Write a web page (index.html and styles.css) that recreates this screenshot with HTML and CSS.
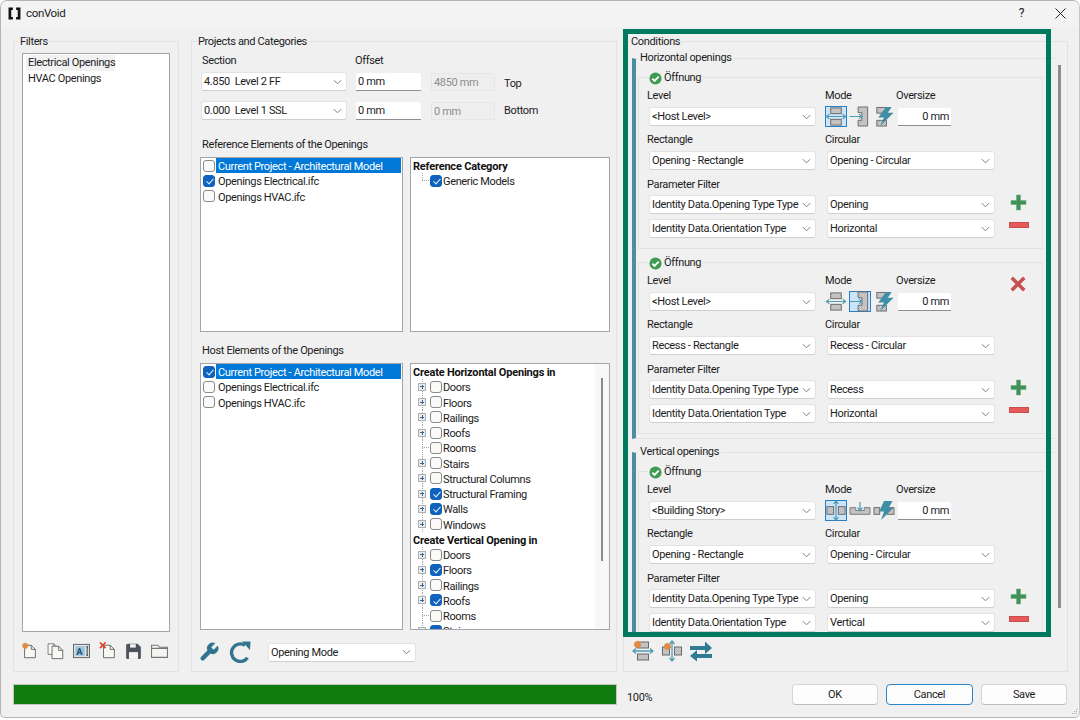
FILE: index.html
```html
<!DOCTYPE html>
<html lang="en">
<head>
<meta charset="utf-8">
<title>conVoid</title>
<link rel="stylesheet" href="styles.css">
</head>
<body>
<svg class="defs" aria-hidden="true">
  <defs>
    <pattern id="hatch" width="2.500" height="2.500" patternUnits="userSpaceOnUse">
      <rect width="2.500" height="2.500" fill="#d4d4d4"/>
      <path d="M0 2.500L2.500 0" stroke="#8a8a8a" stroke-width=".6"/>
    </pattern>
    <symbol id="chev" viewBox="0 0 10 6"><path d="M1 1l4 4 4-4" fill="none" stroke="#6f6f6f" stroke-width="1"/></symbol>
    <symbol id="ok" viewBox="0 0 14 14"><circle cx="7" cy="7" r="6.500" fill="#3f9a52"/><path d="M3.600 7.200l2.400 2.400 4.400-4.600" fill="none" stroke="#fff" stroke-width="2"/></symbol>
    <symbol id="plus" viewBox="0 0 17 17"><path d="M6.500 1h4v5.500H16v4h-5.500V16h-4v-5.500H1v-4h5.500z" fill="#3f9159" stroke="#6fae83" stroke-width=".6"/></symbol>
    <symbol id="minus" viewBox="0 0 20 6"><rect x=".5" y=".5" width="19" height="5" fill="#e8595a" stroke="#c45050"/></symbol>
    <symbol id="cross" viewBox="0 0 16 16"><path d="M3 .5l5 5 5-5L15.500 3l-5 5 5 5-2.500 2.500-5-5-5 5L.5 13l5-5-5-5z" fill="#c8504f"/></symbol>
    <symbol id="ht" viewBox="0 0 22 22">
      <rect x="5.500" y="2" width="11" height="6" fill="url(#hatch)" stroke="#6a6a6a"/>
      <rect x="5.500" y="14" width="11" height="6" fill="url(#hatch)" stroke="#6a6a6a"/>
      <path d="M1 11h20M4 8.500L1 11l3 2.500M18 8.500l3 2.500-3 2.500" fill="none" stroke="#4f9db3" stroke-width="1.300"/>
    </symbol>
    <symbol id="hr" viewBox="0 0 22 22">
      <path d="M9 1h10v20H9v-6h4V7H9z" fill="url(#hatch)" stroke="#6a6a6a"/>
      <path d="M0 11h13M10 8.500l3 2.500-3 2.500" fill="none" stroke="#4f9db3" stroke-width="1.300"/>
    </symbol>
    <symbol id="hl" viewBox="0 0 22 22">
      <rect x="3.500" y="1.500" width="10" height="6" fill="url(#hatch)" stroke="#6a6a6a"/>
      <rect x="3.500" y="15" width="10" height="6" fill="url(#hatch)" stroke="#6a6a6a"/>
      <path d="M13 1h6l-4 6h6L7 21l4-9H5z" fill="#3f8ea6"/>
    </symbol>
    <symbol id="vt" viewBox="0 0 22 22">
      <rect x="1.500" y="7" width="7" height="8" fill="url(#hatch)" stroke="#6a6a6a"/>
      <rect x="13.500" y="7" width="7" height="8" fill="url(#hatch)" stroke="#6a6a6a"/>
      <path d="M11 1v20M8.500 4L11 1l2.500 3M8.500 18l2.500 3 2.500-3" fill="none" stroke="#4f9db3" stroke-width="1.300"/>
    </symbol>
    <symbol id="vr" viewBox="0 0 22 22">
      <path d="M.5 8h6v3h9V8h6v7H.5z" fill="url(#hatch)" stroke="#7a7a7a"/>
      <path d="M11 2v9M8.500 8l2.500 3 2.500-3" fill="none" stroke="#4f9db3" stroke-width="1.300"/>
    </symbol>
    <symbol id="vl" viewBox="0 0 22 22">
      <rect x=".5" y="8" width="6" height="7" fill="url(#hatch)" stroke="#6a6a6a"/>
      <rect x="14.500" y="8" width="7" height="7" fill="url(#hatch)" stroke="#6a6a6a"/>
      <path d="M11 1h9l-4 7h5L8 21l3-9H6z" fill="#3f8ea6"/>
    </symbol>
    <symbol id="gear" viewBox="0 0 8 8"><circle cx="4" cy="4" r="2.700" fill="#e08a45" stroke="#e08a45" stroke-width="1.200" stroke-dasharray="1.500 .8"/></symbol>
    <symbol id="page" viewBox="0 0 16 18"><path d="M1.500 1.500h8l5 5v10h-13z" fill="#f9f9f4" stroke="#555"/><path d="M9.500 1.500v5h5" fill="none" stroke="#555"/></symbol>
  </defs>
</svg>

<div class="window">
  <header class="titlebar">
    <svg class="logo" viewBox="0 0 12 12" aria-hidden="true"><path d="M.5.500h4v2.200H3v6.600h1.500v2.200h-4zM11.500.500h-4v2.200H9v6.600H7.500v2.200h4z" fill="#111"/></svg>
    <span class="app-name">conVoid</span>
    <span class="help">?</span>
    <svg class="close" viewBox="0 0 11 11" aria-hidden="true"><path d="M.5.500l10 10M10.500.500l-10 10" stroke="#222" stroke-width="1"/></svg>
  </header>

  <main class="main">
    <section class="group filters">
      <div class="group-title">Filters</div>
      <div class="list filter-list">
        <div class="filter-item current">Electrical Openings</div>
        <div class="filter-item">HVAC Openings</div>
      </div>
      <div class="filter-tools">
        <span class="tool"><svg viewBox="0 0 17 19"><use href="#page" x="2" y="2" width="14" height="16"/><use href="#gear" x="0" y="0" width="8" height="8"/></svg></span>
        <span class="tool"><svg viewBox="0 0 18 19"><use href="#page" x="0" y="0" width="12" height="15"/><use href="#page" x="4" y="3" width="14" height="16"/></svg></span>
        <span class="tool"><svg viewBox="0 0 18 15"><rect x=".5" y=".5" width="17" height="14" fill="#dfe3e6" stroke="#5b6168"/><rect x="2.500" y="2.500" width="10" height="10" fill="#9cc3dc"/><text x="3.500" y="11.500" class="ai-text">A</text><path d="M15 3v9M14 3h2M14 12h2" stroke="#333" fill="none"/></svg></span>
        <span class="tool"><svg viewBox="0 0 17 19"><use href="#page" x="3" y="2" width="14" height="16"/><path d="M.5.500l6 6M6.500.500l-6 6" stroke="#d8432f" stroke-width="1.800"/></svg></span>
        <span class="tool"><svg viewBox="0 0 15 15"><path d="M1 2.500A1.500 1.500 0 0 1 2.500 1H11l3 3v9.500a1 1 0 0 1-1 1H2a1 1 0 0 1-1-1z" fill="#4d535b"/><rect x="4.500" y="1.500" width="5" height="3" fill="#f4f4f4"/><rect x="3.500" y="8.500" width="8" height="6" fill="#f4f4f4"/></svg></span>
        <span class="tool"><svg viewBox="0 0 16 14"><path d="M.5 1.500h6l1.500 2h7.500v9.500H.5z" fill="#f4f4f0" stroke="#777"/><path d="M.5 4.500h15" stroke="#777"/></svg></span>
      </div>
    </section>

    <section class="group projects">
      <div class="group-title">Projects and Categories</div>
      <div class="section-head">
        <span class="lbl lbl-section">Section</span>
        <span class="lbl">Offset</span>
      </div>
      <div class="level-row">
        <div class="combo level-combo"><span>4.850&nbsp; Level 2 FF</span><svg class="chev"><use href="#chev"/></svg></div>
        <div class="input offset">0 mm</div>
        <div class="input disabled">4850 mm</div>
        <span class="side-lbl side-top">Top</span>
      </div>
      <div class="level-row">
        <div class="combo level-combo"><span>0.000&nbsp; Level 1 SSL</span><svg class="chev"><use href="#chev"/></svg></div>
        <div class="input offset">0 mm</div>
        <div class="input disabled">0 mm</div>
        <span class="side-lbl">Bottom</span>
      </div>

      <div class="lbl list-head first-head">Reference Elements of the Openings</div>
      <div class="list-pair ref-pair">
        <div class="list model-list">
          <div class="check-row"><i class="cb"></i><span class="row-text selected">Current Project - Architectural Model</span></div>
          <div class="check-row"><i class="cb on"></i><span class="row-text">Openings Electrical.ifc</span></div>
          <div class="check-row"><i class="cb"></i><span class="row-text">Openings HVAC.ifc</span></div>
        </div>
        <div class="list tree-list">
          <div class="tree-head">Reference Category</div>
          <div class="tree-row last"><i class="leaf"></i><i class="cb on"></i><span>Generic Models</span></div>
        </div>
      </div>

      <div class="lbl list-head">Host Elements of the Openings</div>
      <div class="list-pair host-pair">
        <div class="list model-list">
          <div class="check-row"><i class="cb on"></i><span class="row-text selected">Current Project - Architectural Model</span></div>
          <div class="check-row"><i class="cb"></i><span class="row-text">Openings Electrical.ifc</span></div>
          <div class="check-row"><i class="cb"></i><span class="row-text">Openings HVAC.ifc</span></div>
        </div>
        <div class="list tree-list host-tree">
          <div class="tree-body">
            <div class="tree-head">Create Horizontal Openings in</div>
            <div class="tree-row"><i class="exp"></i><i class="cb"></i><span>Doors</span></div>
            <div class="tree-row"><i class="exp"></i><i class="cb"></i><span>Floors</span></div>
            <div class="tree-row"><i class="exp"></i><i class="cb"></i><span>Railings</span></div>
            <div class="tree-row"><i class="exp"></i><i class="cb"></i><span>Roofs</span></div>
            <div class="tree-row"><i class="leaf"></i><i class="cb"></i><span>Rooms</span></div>
            <div class="tree-row"><i class="exp"></i><i class="cb"></i><span>Stairs</span></div>
            <div class="tree-row"><i class="exp"></i><i class="cb"></i><span>Structural Columns</span></div>
            <div class="tree-row"><i class="exp"></i><i class="cb on"></i><span>Structural Framing</span></div>
            <div class="tree-row"><i class="exp"></i><i class="cb on"></i><span>Walls</span></div>
            <div class="tree-row"><i class="exp"></i><i class="cb"></i><span>Windows</span></div>
            <div class="tree-head">Create Vertical Opening in</div>
            <div class="tree-row"><i class="exp"></i><i class="cb"></i><span>Doors</span></div>
            <div class="tree-row"><i class="exp"></i><i class="cb on"></i><span>Floors</span></div>
            <div class="tree-row"><i class="exp"></i><i class="cb"></i><span>Railings</span></div>
            <div class="tree-row"><i class="exp"></i><i class="cb on"></i><span>Roofs</span></div>
            <div class="tree-row"><i class="leaf"></i><i class="cb"></i><span>Rooms</span></div>
            <div class="tree-row"><i class="exp"></i><i class="cb on"></i><span>Stairs</span></div>
          </div>
          <div class="tree-scroll"><div class="tree-thumb"></div></div>
        </div>
      </div>

      <div class="project-tools">
        <svg class="big-tool" viewBox="0 0 24 24" aria-hidden="true"><path d="M14.700 6.300a1 1 0 0 0 0 1.400l1.600 1.600a1 1 0 0 0 1.400 0l3.770-3.770a6 6 0 0 1-7.940 7.940l-6.910 6.910a2.120 2.120 0 0 1-3-3l6.910-6.910a6 6 0 0 1 7.940-7.940l-3.760 3.760z" fill="#2f7391" stroke="#2f7391" stroke-width=".7"/></svg>
        <svg class="big-tool" viewBox="0 0 22 22" aria-hidden="true"><path d="M18.500 16.800A8.800 8.800 0 1 1 16 4.200" fill="none" stroke="#33758f" stroke-width="3.400"/><path d="M13 .5h8.500L21 9z" fill="#33758f"/></svg>
        <div class="combo mode-combo"><span>Opening Mode</span><svg class="chev"><use href="#chev"/></svg></div>
      </div>
    </section>

    <section class="group conditions">
      <div class="group-title">Conditions</div>
      <div class="cond-body">
        <div class="cond-scroll">

          <div class="opening-section">
            <div class="section-title">Horizontal openings</div>
            <div class="card">
              <div class="card-title"><svg class="ok"><use href="#ok"/></svg>Öffnung</div>
              <div class="card-labels"><span class="c1">Level</span><span class="lbl-mode">Mode</span><span>Oversize</span></div>
              <div class="card-row row-gap7">
                <div class="combo c-left"><span>&lt;Host Level&gt;</span><svg class="chev"><use href="#chev"/></svg></div>
                <span class="mode-btn active"><svg><use href="#ht"/></svg></span>
                <span class="mode-btn"><svg><use href="#hr"/></svg></span>
                <span class="mode-btn"><svg><use href="#hl"/></svg></span>
                <div class="input oversize">0 mm</div>
              </div>
              <div class="card-labels"><span class="c1">Rectangle</span><span>Circular</span></div>
              <div class="card-row row-gap8">
                <div class="combo c-left"><span>Opening - Rectangle</span><svg class="chev"><use href="#chev"/></svg></div>
                <div class="combo c-right"><span>Opening - Circular</span><svg class="chev"><use href="#chev"/></svg></div>
              </div>
              <div class="card-labels tight"><span>Parameter Filter</span></div>
              <div class="card-row row-gap5">
                <div class="combo c-left"><span>Identity Data.Opening Type Type</span><svg class="chev"><use href="#chev"/></svg></div>
                <div class="combo c-right"><span>Opening</span><svg class="chev"><use href="#chev"/></svg></div>
                <svg class="add"><use href="#plus"/></svg>
              </div>
              <div class="card-row">
                <div class="combo c-left"><span>Identity Data.Orientation Type</span><svg class="chev"><use href="#chev"/></svg></div>
                <div class="combo c-right"><span>Horizontal</span><svg class="chev"><use href="#chev"/></svg></div>
                <svg class="remove"><use href="#minus"/></svg>
              </div>
            </div>

            <div class="card card-next">
              <div class="card-title"><svg class="ok"><use href="#ok"/></svg>Öffnung</div>
              <div class="card-labels"><span class="c1">Level</span><span class="lbl-mode">Mode</span><span class="lbl-over">Oversize</span><svg class="delete"><use href="#cross"/></svg></div>
              <div class="card-row row-gap7">
                <div class="combo c-left"><span>&lt;Host Level&gt;</span><svg class="chev"><use href="#chev"/></svg></div>
                <span class="mode-btn"><svg><use href="#ht"/></svg></span>
                <span class="mode-btn active"><svg><use href="#hr"/></svg></span>
                <span class="mode-btn"><svg><use href="#hl"/></svg></span>
                <div class="input oversize">0 mm</div>
              </div>
              <div class="card-labels"><span class="c1">Rectangle</span><span>Circular</span></div>
              <div class="card-row row-gap8">
                <div class="combo c-left"><span>Recess - Rectangle</span><svg class="chev"><use href="#chev"/></svg></div>
                <div class="combo c-right"><span>Recess - Circular</span><svg class="chev"><use href="#chev"/></svg></div>
              </div>
              <div class="card-labels tight"><span>Parameter Filter</span></div>
              <div class="card-row row-gap5">
                <div class="combo c-left"><span>Identity Data.Opening Type Type</span><svg class="chev"><use href="#chev"/></svg></div>
                <div class="combo c-right"><span>Recess</span><svg class="chev"><use href="#chev"/></svg></div>
                <svg class="add"><use href="#plus"/></svg>
              </div>
              <div class="card-row">
                <div class="combo c-left"><span>Identity Data.Orientation Type</span><svg class="chev"><use href="#chev"/></svg></div>
                <div class="combo c-right"><span>Horizontal</span><svg class="chev"><use href="#chev"/></svg></div>
                <svg class="remove"><use href="#minus"/></svg>
              </div>
            </div>
          </div>

          <div class="opening-section second">
            <div class="section-title">Vertical openings</div>
            <div class="card">
              <div class="card-title"><svg class="ok"><use href="#ok"/></svg>Öffnung</div>
              <div class="card-labels"><span class="c1">Level</span><span class="lbl-mode">Mode</span><span>Oversize</span></div>
              <div class="card-row row-gap7">
                <div class="combo c-left"><span>&lt;Building Story&gt;</span><svg class="chev"><use href="#chev"/></svg></div>
                <span class="mode-btn active"><svg><use href="#vt"/></svg></span>
                <span class="mode-btn"><svg><use href="#vr"/></svg></span>
                <span class="mode-btn"><svg><use href="#vl"/></svg></span>
                <div class="input oversize">0 mm</div>
              </div>
              <div class="card-labels"><span class="c1">Rectangle</span><span>Circular</span></div>
              <div class="card-row row-gap8">
                <div class="combo c-left"><span>Opening - Rectangle</span><svg class="chev"><use href="#chev"/></svg></div>
                <div class="combo c-right"><span>Opening - Circular</span><svg class="chev"><use href="#chev"/></svg></div>
              </div>
              <div class="card-labels tight"><span>Parameter Filter</span></div>
              <div class="card-row row-gap5">
                <div class="combo c-left"><span>Identity Data.Opening Type Type</span><svg class="chev"><use href="#chev"/></svg></div>
                <div class="combo c-right"><span>Opening</span><svg class="chev"><use href="#chev"/></svg></div>
                <svg class="add"><use href="#plus"/></svg>
              </div>
              <div class="card-row">
                <div class="combo c-left"><span>Identity Data.Orientation Type</span><svg class="chev"><use href="#chev"/></svg></div>
                <div class="combo c-right"><span>Vertical</span><svg class="chev"><use href="#chev"/></svg></div>
                <svg class="remove"><use href="#minus"/></svg>
              </div>
            </div>
          </div>
        </div>
        <div class="cond-bar"></div>
      </div>
      <div class="cond-tools">
        <svg class="cond-tool" viewBox="0 0 22 22"><use href="#ht"/><use href="#gear" x="1" y="0" width="9" height="9"/></svg>
        <svg class="cond-tool" viewBox="0 0 22 22"><use href="#vt"/><use href="#gear" x="2" y="2" width="9" height="9"/></svg>
        <svg class="cond-tool" viewBox="0 0 22 22"><path d="M0 6h15V1.500L22 8l-7 6v-4H0zM22 14H7v-4L0 16l7 5.500V18h15z" fill="#2f7b92"/></svg>
      </div>
    </section>
  </main>

  <footer class="footer">
    <div class="progress"><div class="progress-fill"></div></div>
    <span class="percent">100%</span>
    <div class="buttons">
      <button class="btn" type="button">OK</button>
      <button class="btn default" type="button">Cancel</button>
      <button class="btn" type="button">Save</button>
    </div>
  </footer>

  <div class="highlight"></div>
  <svg class="grip" viewBox="0 0 8 8" aria-hidden="true"><path d="M6 1h1v1H6zM4 3h1v1H4zM6 3h1v1H6zM2 5h1v1H2zM4 5h1v1H4zM6 5h1v1H6z" fill="#aaa"/></svg>
</div>
</body>
</html>
```
FILE: styles.css
```css
* { box-sizing: border-box; }
html, body { margin: 0; padding: 0; background: #fff; }
body {
  font-family: Roboto, "Liberation Sans", sans-serif;
  font-size: 11px;
  letter-spacing: -0.35px;
  color: #1c1c1c;
  width: 1080px;
  height: 720px;
  overflow: hidden;
}
.defs { display: block; width: 0; height: 0; overflow: hidden; }

.window {
  position: relative;
  width: 1080px;
  height: 718px;
  background: #f0f0f0;
  border: 1px solid #b4b4b4;
  border-right-color: #c8c8c8;
  border-radius: 7px 7px 5px 5px;
  overflow: hidden;
  display: flex;
  flex-direction: column;
}

.titlebar {
  height: 26px;
  flex: none;
  background: #f3f3f3;
  display: flex;
  align-items: center;
  padding: 0 0 2px 7px;
}
.logo { width: 13px; height: 13px; flex: none; }
.app-name { margin-left: 5px; font-size: 11.500px; }
.help { margin-left: auto; margin-right: 31px; font-size: 12px; }
.close { width: 11px; height: 11px; margin-right: 13px; }

.main {
  display: flex;
  flex: none;
  height: 631px;
  margin-top: 14px;
  padding-left: 12px;
}
.group {
  border: 1px solid #e2e2e2;
  height: 631px;
  flex: none;
}
.group-title {
  width: fit-content;
  height: 14px;
  line-height: 14px;
  margin: -7px 0 0 5px;
  padding: 0 1px;
  background: #f0f0f0;
  white-space: nowrap;
}

.filters { width: 166px; }
.filters .group-title { margin-left: 5px; }
.list {
  background: #fff;
  border: 1px solid #a2a6aa;
  overflow: hidden;
}
.filter-list {
  width: 148px;
  height: 579px;
  margin: 4px 0 0 8px;
  padding: 1px 0 0 3px;
}
.filter-item {
  height: 15.500px;
  line-height: 15.500px;
  padding-left: 2px;
  width: fit-content;
  min-width: 89px;
}
.filter-item.current { background: #f2f2f2; }
.filter-tools {
  display: flex;
  margin: 9px 0 0 7px;
}
.tool {
  width: 26px;
  height: 19px;
  display: flex;
  align-items: center;
}
.tool svg { width: 17px; height: 18px; }
.ai-text { font: bold 10px Roboto, sans-serif; fill: #1d4f78; }

.projects { width: 426px; margin-left: 12px; padding-left: 9px; }
.projects .group-title { margin-left: -4px; }
.section-head {
  display: flex;
  height: 14px;
  line-height: 14px;
  margin-top: 5px;
  padding-left: 1px;
}
.lbl-section { width: 153px; }
.level-row {
  display: flex;
  align-items: center;
  height: 19px;
  margin-top: 4px;
}
.level-row + .level-row { margin-top: 10px; }
.combo {
  height: 19px;
  background: #fff;
  border: 1px solid #e3e3e3;
  border-bottom-color: #cfcfcf;
  border-radius: 3px;
  display: flex;
  align-items: center;
  justify-content: space-between;
  padding: 0 4px 0 2px;
  white-space: nowrap;
  flex: none;
}
.chev { width: 9px; height: 6px; flex: none; }
.level-combo { width: 146px; }
.input {
  height: 18px;
  line-height: 17px;
  background: #fff;
  border-bottom: 1px solid #8f8f8f;
  border-radius: 2px 2px 0 0;
  padding: 0 2px;
  flex: none;
  white-space: nowrap;
}
.offset { width: 65px; margin-left: 9px; }
.disabled {
  width: 64px;
  margin-left: 10px;
  background: #eeeeee;
  border: 1px solid #e6e6e6;
  color: #8d8d8d;
}
.side-lbl { margin-left: 9px; }
.side-top { margin-top: 4px; }

.list-head {
  display: block;
  height: 14px;
  line-height: 14px;
  margin: 12px 0 5px 1px;
}
.first-head { margin-top: 18px; }
.list-pair { display: flex; gap: 7px; margin-left: -1px; }
.ref-pair .list { height: 175px; }
.host-pair .list { height: 267px; }
.model-list { width: 203px; flex: none; padding-left: 2px; padding-right: 1px; }
.tree-list { width: 200px; flex: none; padding-left: 0; }
.check-row, .tree-row, .tree-head {
  height: 15.250px;
  line-height: 15.250px;
  display: flex;
  align-items: center;
  white-space: nowrap;
}
.cb {
  display: block;
  position: relative;
  width: 12px;
  height: 12px;
  flex: none;
  background: #fafafa;
  border: 1px solid #8a8a8a;
  border-radius: 3px;
}
.cb.on { background: #0f62be; border-color: #0f62be; }
.cb.on::after {
  content: "";
  position: absolute;
  left: 3.500px;
  top: 1.500px;
  width: 3px;
  height: 6px;
  border: solid #e8f1fb;
  border-width: 0 1px 1px 0;
  transform: rotate(42deg);
}
.row-text { flex: 1; margin-left: 1px; padding: 1px 0 0 2px; height: 15.250px; }
.row-text.selected { background: #0078d7; color: #fff; }

.tree-head { font-weight: 700; padding: 2px 0 0 2px; color: #111; letter-spacing: -0.2px; }
.tree-row {
  padding-left: 7px;
  background: repeating-linear-gradient(to bottom, #a8a8a8 0 1px, transparent 1px 2px) 11px 0 / 1px 100% no-repeat;
}
.tree-row.last { background-size: 1px 50%; }
.tree-row span { margin-left: 1px; padding-top: 2px; }
.exp, .leaf {
  display: block;
  width: 8px;
  height: 8px;
  margin-right: 4px;
  flex: none;
}
.exp {
  border: 1px solid #b0b0b0;
  background:
    linear-gradient(#44608c, #44608c) center / 4px 1px no-repeat,
    linear-gradient(#44608c, #44608c) center / 1px 4px no-repeat,
    #e6edf3;
}
.leaf {
  width: 12px;
  margin-right: 0;
  background: repeating-linear-gradient(to right, #a8a8a8 0 1px, transparent 1px 2px) 4px center / 8px 1px no-repeat;
}
.host-tree { display: flex; }
.tree-body { width: 184px; flex: none; }
.tree-scroll { flex: 1; background: #f8f8f8; padding: 14px 0 0 6px; }
.tree-thumb { width: 2px; height: 183px; background: #8c8c8c; }

.project-tools {
  display: flex;
  align-items: center;
  margin-top: 11px;
}
.big-tool { width: 22px; height: 22px; flex: none; margin-right: 9px; margin-left: -3px; }
.big-tool + .big-tool { margin-left: 0; margin-right: 17px; }
.mode-combo { width: 148px; }

.conditions { width: 445px; margin-left: 6px; }
.conditions .group-title { margin-left: 6px; }
.cond-body { display: flex; margin-top: 2px; height: 582px; }
.cond-scroll {
  width: 423px;
  height: 582px;
  margin-left: 8px;
  overflow: hidden;
  flex: none;
}
.cond-bar {
  width: 3px;
  height: 543px;
  margin: 14px 0 0 3px;
  background: #8c8c8c;
}
.opening-section {
  margin-top: 7px;
  border-left: 4px solid #4d8ca5;
  border-top: 1px solid #e2e2e2;
  border-bottom: 1px solid #e2e2e2;
  padding: 0 0 4px 2px;
}
.opening-section.second { margin-top: 13px; }
.section-title {
  width: fit-content;
  height: 14px;
  line-height: 14px;
  margin-top: -8px;
  padding: 0 2px;
  background: #f0f0f0;
}
.card {
  width: 405px;
  margin-top: 12px;
  border: 1px solid #e2e2e2;
  padding: 0 0 10px 8px;
}
.card-next { margin-top: 13px; }
.card-title {
  width: fit-content;
  height: 14px;
  line-height: 14px;
  margin: -7px 0 4px 1px;
  padding: 0 1px;
  background: #f0f0f0;
  display: flex;
  align-items: center;
  gap: 2px;
}
.ok { width: 13px; height: 13px; flex: none; }
.card-labels {
  display: flex;
  height: 14px;
  line-height: 14px;
  margin-bottom: 4px;
}
.card-labels.tight { margin-bottom: 3px; }
.c1 { width: 178px; flex: none; }
.lbl-mode { width: 71px; flex: none; }
.lbl-over { width: 114px; flex: none; }
.delete { width: 16px; height: 16px; flex: none; margin-top: 2px; }
.card-row {
  display: flex;
  align-items: center;
  height: 19px;
}
.row-gap7 { margin-bottom: 7px; }
.row-gap8 { margin-bottom: 8px; }
.row-gap5 { margin-bottom: 5px; }
.c-left { width: 167px; margin-left: 2px; }
.c-right { width: 168px; margin-left: 11px; }
.mode-btn {
  width: 22px;
  height: 21px;
  flex: none;
  margin-left: 2px;
  border: 1px solid transparent;
  display: flex;
  align-items: center;
  justify-content: center;
}
.c-left + .mode-btn { margin-left: 9px; }
.mode-btn.active { background: #cce4f7; border-color: #2a7fc4; }
.mode-btn svg { width: 22px; height: 21px; flex: none; margin: -1px; }
.oversize { width: 53px; margin-left: 3px; text-align: right; padding-right: 2px; }
.add { width: 17px; height: 17px; margin-left: 15px; flex: none; margin-top: -5px; }
.remove { width: 20px; height: 6px; margin-left: 14px; flex: none; margin-top: -7px; }

.cond-tools {
  display: flex;
  gap: 7px;
  margin: 7px 0 0 8px;
}
.cond-tool { width: 22px; height: 22px; flex: none; }

.footer {
  display: flex;
  align-items: flex-start;
  margin-top: 12px;
  padding-left: 12px;
}
.progress {
  width: 604px;
  height: 21px;
  border: 1px solid #c4c4c4;
  background: #e6e6e6;
  flex: none;
}
.progress-fill { height: 100%; background: #107c10; }
.percent { margin: 7px 0 0 10px; width: 165px; flex: none; }
.buttons { display: flex; gap: 8px; }
.btn {
  width: 86px;
  height: 21px;
  padding: 0;
  font: inherit;
  letter-spacing: inherit;
  color: #1c1c1c;
  background: #fdfdfd;
  border: 1px solid #d6d6d6;
  border-bottom-color: #bcbcbc;
  border-radius: 4px;
}
.btn.default { border: 1.500px solid #2a86c8; width: 87px; }

.highlight {
  position: absolute;
  left: 622px;
  top: 28px;
  width: 428px;
  height: 608px;
  border: 5px solid #007a5e;
  pointer-events: none;
}
.grip {
  position: absolute;
  right: 1px;
  bottom: 1px;
  width: 8px;
  height: 8px;
}
```
